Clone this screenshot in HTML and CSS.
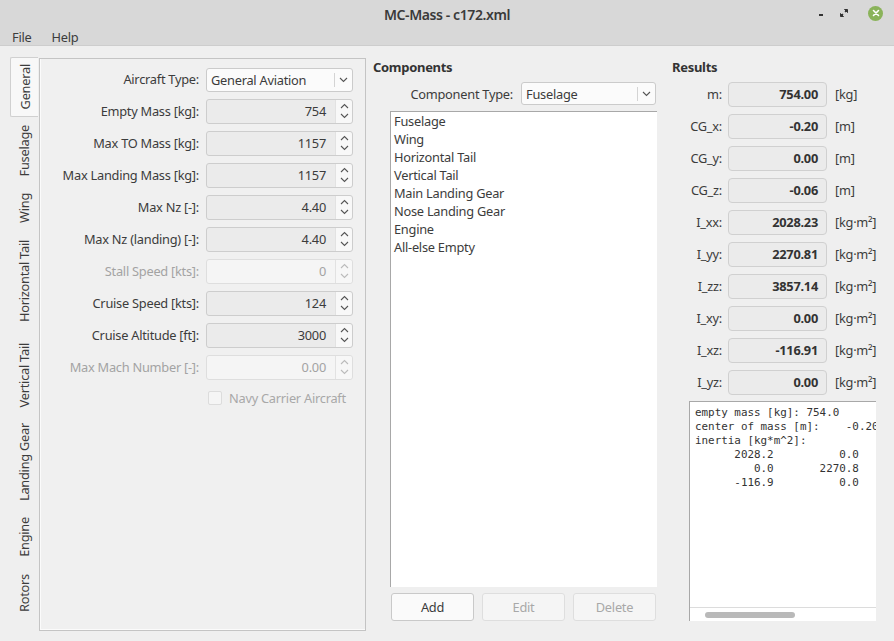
FILE: index.html
```html
<!DOCTYPE html>
<html>
<head>
<meta charset="utf-8">
<title>MC-Mass - c172.xml</title>
<link rel="stylesheet" href="styles.css">
</head>
<body>
<header class="titlebar">
  <div></div>
  <div class="title">MC-Mass - c172.xml</div>
  <div class="controls">
    <span class="ctl-min"></span>
    <svg class="ctl-max" width="10" height="10" viewBox="0 0 10 10"><path d="M5.5 1.5h3v3z M4.5 8.5h-3v-3z" fill="#333" stroke="#333" stroke-width="1"/><path d="M8 2L6 4 M2 8l2-2" stroke="#333" stroke-width="1.4"/></svg>
    <span class="ctl-close"><svg width="8" height="8" viewBox="0 0 8 8"><path d="M1.5 1.5l5 5M6.5 1.5l-5 5" stroke="#fff" stroke-width="1.6" stroke-linecap="round"/></svg></span>
  </div>
</header>
<nav class="menubar"><span>File</span><span>Help</span></nav>
<main class="content">
  <section class="tabwidget">
    <div class="tabbar">
      <div class="tab active t-general"><span>General</span></div>
      <div class="tab t-fuselage"><span>Fuselage</span></div>
      <div class="tab t-wing"><span>Wing</span></div>
      <div class="tab t-htail"><span>Horizontal Tail</span></div>
      <div class="tab t-vtail"><span>Vertical Tail</span></div>
      <div class="tab t-gear"><span>Landing Gear</span></div>
      <div class="tab t-engine"><span>Engine</span></div>
      <div class="tab t-rotors"><span>Rotors</span></div>
    </div>
    <div class="pane">
      <div class="form">
        <div class="row"><span class="lbl">Aircraft Type:</span>
          <div class="combo"><span class="combo-text">General Aviation</span><span class="combo-btn"><svg width="9" height="6" viewBox="0 0 9 6"><path d="M1 1l3.5 3.5L8 1" fill="none" stroke="#555" stroke-width="1.1"/></svg></span></div></div>
        <div class="row"><span class="lbl">Empty Mass [kg]:</span><div class="spin"><span class="spin-val">754</span><span class="spin-btns"><svg width="9" height="6" viewBox="0 0 9 6"><path d="M1 5l3.5-3.5L8 5" fill="none" stroke="#555" stroke-width="1.1"/></svg><svg width="9" height="6" viewBox="0 0 9 6"><path d="M1 1l3.5 3.5L8 1" fill="none" stroke="#555" stroke-width="1.1"/></svg></span></div></div>
        <div class="row"><span class="lbl">Max TO Mass [kg]:</span><div class="spin"><span class="spin-val">1157</span><span class="spin-btns"><svg width="9" height="6" viewBox="0 0 9 6"><path d="M1 5l3.5-3.5L8 5" fill="none" stroke="#555" stroke-width="1.1"/></svg><svg width="9" height="6" viewBox="0 0 9 6"><path d="M1 1l3.5 3.5L8 1" fill="none" stroke="#555" stroke-width="1.1"/></svg></span></div></div>
        <div class="row"><span class="lbl">Max Landing Mass [kg]:</span><div class="spin"><span class="spin-val">1157</span><span class="spin-btns"><svg width="9" height="6" viewBox="0 0 9 6"><path d="M1 5l3.5-3.5L8 5" fill="none" stroke="#555" stroke-width="1.1"/></svg><svg width="9" height="6" viewBox="0 0 9 6"><path d="M1 1l3.5 3.5L8 1" fill="none" stroke="#555" stroke-width="1.1"/></svg></span></div></div>
        <div class="row"><span class="lbl">Max Nz [-]:</span><div class="spin"><span class="spin-val">4.40</span><span class="spin-btns"><svg width="9" height="6" viewBox="0 0 9 6"><path d="M1 5l3.5-3.5L8 5" fill="none" stroke="#555" stroke-width="1.1"/></svg><svg width="9" height="6" viewBox="0 0 9 6"><path d="M1 1l3.5 3.5L8 1" fill="none" stroke="#555" stroke-width="1.1"/></svg></span></div></div>
        <div class="row"><span class="lbl">Max Nz (landing) [-]:</span><div class="spin"><span class="spin-val">4.40</span><span class="spin-btns"><svg width="9" height="6" viewBox="0 0 9 6"><path d="M1 5l3.5-3.5L8 5" fill="none" stroke="#555" stroke-width="1.1"/></svg><svg width="9" height="6" viewBox="0 0 9 6"><path d="M1 1l3.5 3.5L8 1" fill="none" stroke="#555" stroke-width="1.1"/></svg></span></div></div>
        <div class="row disabled"><span class="lbl">Stall Speed [kts]:</span><div class="spin"><span class="spin-val">0</span><span class="spin-btns"><svg width="9" height="6" viewBox="0 0 9 6"><path d="M1 5l3.5-3.5L8 5" fill="none" stroke="#bbb" stroke-width="1.1"/></svg><svg width="9" height="6" viewBox="0 0 9 6"><path d="M1 1l3.5 3.5L8 1" fill="none" stroke="#bbb" stroke-width="1.1"/></svg></span></div></div>
        <div class="row"><span class="lbl">Cruise Speed [kts]:</span><div class="spin"><span class="spin-val">124</span><span class="spin-btns"><svg width="9" height="6" viewBox="0 0 9 6"><path d="M1 5l3.5-3.5L8 5" fill="none" stroke="#555" stroke-width="1.1"/></svg><svg width="9" height="6" viewBox="0 0 9 6"><path d="M1 1l3.5 3.5L8 1" fill="none" stroke="#555" stroke-width="1.1"/></svg></span></div></div>
        <div class="row"><span class="lbl">Cruise Altitude [ft]:</span><div class="spin"><span class="spin-val">3000</span><span class="spin-btns"><svg width="9" height="6" viewBox="0 0 9 6"><path d="M1 5l3.5-3.5L8 5" fill="none" stroke="#555" stroke-width="1.1"/></svg><svg width="9" height="6" viewBox="0 0 9 6"><path d="M1 1l3.5 3.5L8 1" fill="none" stroke="#555" stroke-width="1.1"/></svg></span></div></div>
        <div class="row disabled"><span class="lbl">Max Mach Number [-]:</span><div class="spin"><span class="spin-val">0.00</span><span class="spin-btns"><svg width="9" height="6" viewBox="0 0 9 6"><path d="M1 5l3.5-3.5L8 5" fill="none" stroke="#bbb" stroke-width="1.1"/></svg><svg width="9" height="6" viewBox="0 0 9 6"><path d="M1 1l3.5 3.5L8 1" fill="none" stroke="#bbb" stroke-width="1.1"/></svg></span></div></div>
        <div class="row check-row disabled"><span></span><div class="check"><span class="box"></span><span class="check-lbl">Navy Carrier Aircraft</span></div></div>
      </div>
    </div>
  </section>

  <section class="components">
    <h2 class="heading">Components</h2>
    <div class="ctype">
      <span>Component Type:</span>
      <div class="combo ctype-combo"><span class="combo-text">Fuselage</span><span class="combo-btn"><svg width="9" height="6" viewBox="0 0 9 6"><path d="M1 1l3.5 3.5L8 1" fill="none" stroke="#555" stroke-width="1.1"/></svg></span></div>
    </div>
    <ul class="list">
      <li>Fuselage</li>
      <li>Wing</li>
      <li>Horizontal Tail</li>
      <li>Vertical Tail</li>
      <li>Main Landing Gear</li>
      <li>Nose Landing Gear</li>
      <li>Engine</li>
      <li>All-else Empty</li>
    </ul>
    <div class="buttons">
      <button class="btn">Add</button>
      <button class="btn" disabled>Edit</button>
      <button class="btn" disabled>Delete</button>
    </div>
  </section>

  <section class="results">
    <h2 class="heading">Results</h2>
    <div class="rgrid">
      <span class="rl">m:</span><span class="rv">754.00</span><span class="ru">[kg]</span>
      <span class="rl">CG_x:</span><span class="rv">-0.20</span><span class="ru">[m]</span>
      <span class="rl">CG_y:</span><span class="rv">0.00</span><span class="ru">[m]</span>
      <span class="rl">CG_z:</span><span class="rv">-0.06</span><span class="ru">[m]</span>
      <span class="rl">I_xx:</span><span class="rv">2028.23</span><span class="ru">[kg·m²]</span>
      <span class="rl">I_yy:</span><span class="rv">2270.81</span><span class="ru">[kg·m²]</span>
      <span class="rl">I_zz:</span><span class="rv">3857.14</span><span class="ru">[kg·m²]</span>
      <span class="rl">I_xy:</span><span class="rv">0.00</span><span class="ru">[kg·m²]</span>
      <span class="rl">I_xz:</span><span class="rv">-116.91</span><span class="ru">[kg·m²]</span>
      <span class="rl">I_yz:</span><span class="rv">0.00</span><span class="ru">[kg·m²]</span>
    </div>
    <div class="report">
      <pre class="mono">empty mass [kg]: 754.0
center of mass [m]:    -0.20        0.00       -0.06
inertia [kg*m^2]:
      2028.2          0.0       -116.9
         0.0       2270.8          0.0
      -116.9          0.0       3857.1</pre>
      <div class="hscroll"><div class="thumb"></div></div>
    </div>
  </section>
</main>
</body>
</html>
```
FILE: styles.css
```css
* { box-sizing: border-box; margin: 0; padding: 0; }
html, body { width: 894px; height: 641px; overflow: hidden; }
body {
  background: #efefef;
  font-family: "Noto Sans", "Open Sans", sans-serif;
  font-size: 12.8px;
  letter-spacing: -0.25px;
  color: #3c3c3c;
}

/* title bar */
.titlebar {
  height: 28px;
  background: #d8d8d8;
  display: grid;
  grid-template-columns: 1fr auto 1fr;
  align-items: center;
}
.title { font-size: 14px; font-weight: 600; color: #3a3a3a; letter-spacing: -0.4px; }
.controls { display: flex; justify-content: flex-end; align-items: center; padding-right: 11px; }
.ctl-min { width: 4px; height: 2px; background: #333; margin-right: 16px; margin-top: 1px; }
.ctl-max { margin-right: 19px; margin-top: -2px; }
.ctl-close {
  width: 15px; height: 15px; border-radius: 50%;
  background: #8ab35a;
  display: flex; align-items: center; justify-content: center;
  margin-top: -2px;
}

/* menu bar */
.menubar {
  height: 18px;
  background: #d8d8d8;
  display: flex;
  gap: 20px;
  padding-left: 12px;
  align-items: center;
  line-height: 18px;
  border-bottom: 1px solid #cdcdcd;
}

/* main */
.content { display: flex; padding-left: 10px; height: 595px; }

/* tab widget */
.tabwidget { display: flex; margin-top: 11px; height: 574px; }
.tabbar { width: 29px; display: flex; flex-direction: column; }
.tab { display: flex; align-items: center; justify-content: center; width: 28px; }
.tab span { writing-mode: vertical-rl; transform: rotate(180deg); white-space: nowrap; }
.tab.active { background: #f8f8f8; border: 1px solid #d0d0d0; border-right: none; border-radius: 2px 0 0 2px; }
.t-general { height: 60px; }
.t-fuselage { height: 68px; }
.t-wing { height: 45px; }
.t-htail { height: 103px; }
.t-vtail { height: 84px; }
.t-gear { height: 91px; }
.t-engine { height: 57px; }
.t-rotors { height: 55px; }

.pane {
  width: 327px;
  margin-top: 1px;
  height: 573px;
  border: 1px solid #c4c4c4;
  box-shadow: inset 1px 0 0 #fbfbfb, inset 0 -1px 0 #fbfbfb;
  background: #f0f0f0;
}
.form { display: grid; grid-template-columns: 159px 147px; column-gap: 7px; row-gap: 7px; padding-top: 8px; }
.row { display: contents; }
.lbl { text-align: right; align-self: center; line-height: 25px; height: 25px; white-space: nowrap; }
.row.disabled .lbl { color: #a3a3a3; }

.combo {
  height: 24px;
  align-self: center;
  background: #fbfbfb;
  border: 1px solid #cbcbcb;
  border-radius: 3px;
  display: flex;
  align-items: center;
}
.combo-text { flex: 1; padding-left: 4px; white-space: nowrap; }
.combo-btn {
  width: 17px; height: 14px;
  border-left: 1px solid #d4d4d4;
  display: flex; align-items: center; justify-content: center;
  margin-right: 1px;
}

.spin {
  height: 25px;
  display: flex;
  background: #ebebeb;
  border: 1px solid #cdcdcd;
  border-radius: 3px;
}
.spin-val { flex: 1; text-align: right; padding-right: 9px; line-height: 23px; }
.spin-btns {
  width: 17px;
  background: #f8f8f8;
  display: flex; flex-direction: column; justify-content: space-between; align-items: center;
  padding: 3px 0 4px;
  border-left: 1px solid #e2e2e2;
  border-radius: 0 3px 3px 0;
}
.row.disabled .spin { background: #f5f5f5; border-color: #dedede; }
.row.disabled .spin-val { color: #a3a3a3; }
.row.disabled .spin-btns { background: #f7f7f7; }

.check-row .check { grid-column: 2; display: flex; align-items: center; height: 21px; gap: 7px; padding-left: 2px; color: #a8a8a8; }
.check-lbl { white-space: nowrap; }
.check-row > span:first-child { height: 21px; }
.box { width: 14px; height: 14px; flex: none; border: 1px solid #dcdcdc; background: #f5f5f5; border-radius: 2px; }

/* components */
.heading { font-size: 13px; font-weight: 700; line-height: 18px; margin-top: 12px; color: #333; letter-spacing: -0.3px; }
.components { width: 284px; margin-left: 7px; display: flex; flex-direction: column; }
.ctype { display: flex; justify-content: flex-end; align-items: center; gap: 8px; margin-top: 6px; padding-right: 1px; }
.ctype-combo { width: 135px; height: 23px; }
.list {
  list-style: none;
  margin: 6px 0 0 17px;
  height: 476px;
  background: #fff;
  border-top: 1px solid #a8a8a8;
  border-left: 1px solid #a8a8a8;
  padding-left: 3px;
}
.list li { line-height: 18px; white-space: nowrap; }
.buttons { display: flex; gap: 8px; margin: 6px 0 0 18px; }
.btn {
  width: 83px; height: 28px;
  font: inherit;
  letter-spacing: inherit;
  color: #3c3c3c;
  background: #fafafa;
  border: 1px solid #c9c9c9;
  border-radius: 3px;
}
.btn:disabled { color: #a8a8a8; background: #f5f5f5; border-color: #dedede; }

/* results */
.results { margin-left: 15px; flex: 1; display: flex; flex-direction: column; }
.rgrid {
  display: grid;
  grid-template-columns: 50px 99px auto;
  column-gap: 6px;
  row-gap: 7px;
  margin-top: 6px;
}
.rl { text-align: right; line-height: 25px; }
.rv {
  height: 25px; line-height: 23px;
  background: #ebebeb;
  border: 1px solid #d0d0d0;
  border-radius: 4px;
  text-align: right;
  padding-right: 8px;
  font-weight: 700;
  color: #333;
}
.ru { line-height: 25px; padding-left: 2px; white-space: nowrap; }

.report {
  margin: 6px 0 0 17px;
  width: 187px;
  height: 220px;
  background: #fff;
  border-top: 1px solid #a8a8a8;
  border-left: 1px solid #a8a8a8;
  display: flex;
  flex-direction: column;
  overflow: hidden;
}
.mono {
  flex: 1;
  font-family: "DejaVu Sans Mono", monospace;
  font-size: 10.9px;
  letter-spacing: 0;
  line-height: 14px;
  padding: 4px 0 0 5px;
  color: #333;
  overflow: hidden;
  white-space: pre;
}
.hscroll { height: 14px; border-top: 1px solid #dcdcdc; padding: 4px 0 0 15px; }
.thumb { width: 90px; height: 6px; border-radius: 3px; background: #b9b9b9; }
```
